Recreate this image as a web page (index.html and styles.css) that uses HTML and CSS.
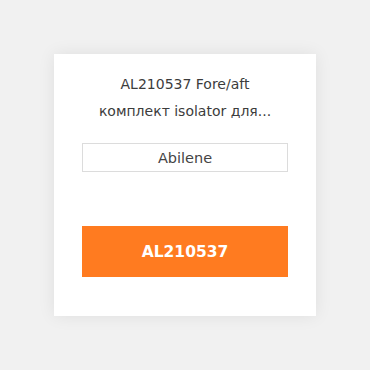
FILE: index.html
```html
<!DOCTYPE html>
<html>
<head>
<meta charset="utf-8">
<link rel="stylesheet" href="styles.css">
</head>
<body>
<div class="card">
  <div class="title">AL210537 Fore/aft комплект isolator для...</div>
  <div class="city">Abilene</div>
  <div class="btn">AL210537</div>
</div>
</body>
</html>
```
FILE: styles.css
```css
html, body { margin: 0; padding: 0; }
body {
  width: 370px; height: 370px;
  background: #f1f1f1;
  font-family: "DejaVu Sans", "Noto Sans", sans-serif;
  padding: 54px;
  box-sizing: border-box;
}
.card {
  width: 262px; height: 262px;
  background: #fff;
  box-shadow: 0 0 16px rgba(0,0,0,0.08);
  box-sizing: border-box;
  padding: 17px 28px 0;
  display: flex; flex-direction: column;
}
.title {
  font-size: 14px;
  line-height: 27px;
  color: #3c3c3c;
  text-align: center;
  padding: 0 8px;
}
.city {
  margin-top: 18px;
  height: 29px;
  border: 1px solid #dcdcdc;
  box-sizing: border-box;
  display: flex; align-items: center; justify-content: center;
  font-size: 14.5px;
  color: #444;
}
.btn {
  margin-top: 54px;
  height: 51px;
  background: #ff7b20;
  color: #fff;
  font-weight: bold;
  font-size: 15.5px;
  display: flex; align-items: center; justify-content: center;
}
```
